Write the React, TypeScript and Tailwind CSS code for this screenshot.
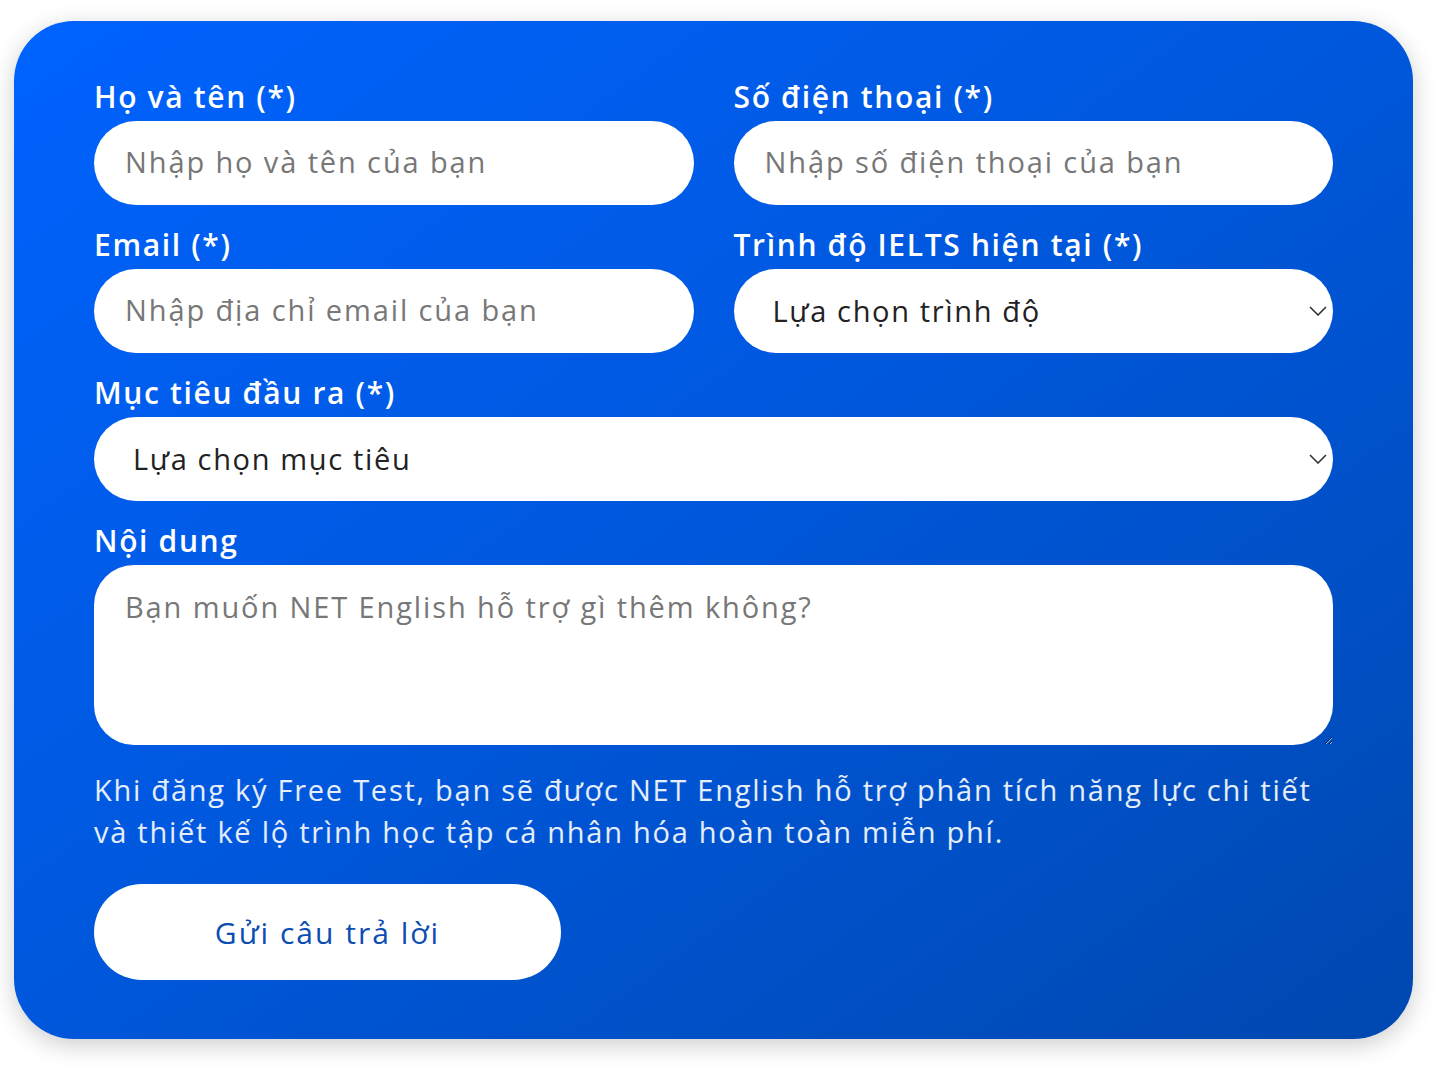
import React from "react";

const FONT = "font-['Open_Sans','Noto_Sans',sans-serif]";

function Label({ children }: { children: React.ReactNode }) {
  return (
    <label className="block h-[40px] text-[30px] font-semibold leading-[32px] tracking-[0.055em] text-white">
      {children}
    </label>
  );
}

function Chevron() {
  return (
    <svg
      className="pointer-events-none absolute right-[6px] top-1/2 -translate-y-1/2"
      width="18"
      height="10"
      viewBox="0 0 18 10"
      fill="none"
      aria-hidden
    >
      <path d="M1 1l8 8 8-8" stroke="#333" strokeWidth="1.6" />
    </svg>
  );
}

const inputCls =
  "h-[84px] w-full rounded-full bg-white pl-[31px] pr-6 pb-[3px] text-[29px] tracking-[0.065em] text-[#222] outline-none placeholder:text-[#777]";
const selectCls =
  "h-[84px] w-full appearance-none rounded-full bg-white pl-[39px] pr-10 text-[29px] tracking-[0.057em] text-[#222] outline-none";

export default function App() {
  return (
    <div className={`min-h-[1070px] bg-white pt-[21px] pl-[14px] ${FONT}`}>
      <form
        className="w-[1399px] rounded-[60px] bg-linear-to-br from-[#0063ff] via-[#0057db] to-[#0048b0] px-[80px] pt-[60px] pb-[59px] shadow-[0_6px_24px_rgba(0,0,0,0.2)]"
        onSubmit={(e) => e.preventDefault()}
      >
        <div className="grid grid-cols-2 gap-x-[40px] gap-y-[24px]">
          <div>
            <Label>Họ và tên (*)</Label>
            <input className={inputCls} placeholder="Nhập họ và tên của bạn" />
          </div>
          <div>
            <Label>Số điện thoại (*)</Label>
            <input className={inputCls} placeholder="Nhập số điện thoại của bạn" />
          </div>
          <div>
            <Label>Email (*)</Label>
            <input className={inputCls} placeholder="Nhập địa chỉ email của bạn" />
          </div>
          <div>
            <Label>Trình độ IELTS hiện tại (*)</Label>
            <div className="relative">
              <select className={selectCls} defaultValue="">
                <option value="">Lựa chọn trình độ</option>
                <option>0 - 3.5</option>
                <option>4.0 - 5.0</option>
                <option>5.5 - 6.5</option>
              </select>
              <Chevron />
            </div>
          </div>
          <div className="col-span-2">
            <Label>Mục tiêu đầu ra (*)</Label>
            <div className="relative">
              <select className={selectCls} defaultValue="">
                <option value="">Lựa chọn mục tiêu</option>
                <option>5.5</option>
                <option>6.5</option>
                <option>7.5+</option>
              </select>
              <Chevron />
            </div>
          </div>
          <div className="col-span-2">
            <Label>Nội dung</Label>
            <textarea
              className="block h-[180px] w-full rounded-[40px] bg-white px-[31px] pt-[22px] text-[29px] leading-[40px] tracking-[0.065em] text-[#222] outline-none placeholder:text-[#777]"
              placeholder="Bạn muốn NET English hỗ trợ gì thêm không?"
            />
          </div>
        </div>

        <p className="mt-[24px] text-[29px] leading-[42px] tracking-[0.06em] text-white/90">
          Khi đăng ký Free Test, bạn sẽ được NET English hỗ trợ phân tích năng lực chi tiết
          <br />
          và thiết kế lộ trình học tập cá nhân hóa hoàn toàn miễn phí.
        </p>

        <button
          type="submit"
          className="mt-[31px] h-[96px] w-[467px] rounded-full bg-white text-[30px] tracking-[0.067em] text-[#0b4db3]"
        >
          Gửi câu trả lời
        </button>
      </form>
    </div>
  );
}
